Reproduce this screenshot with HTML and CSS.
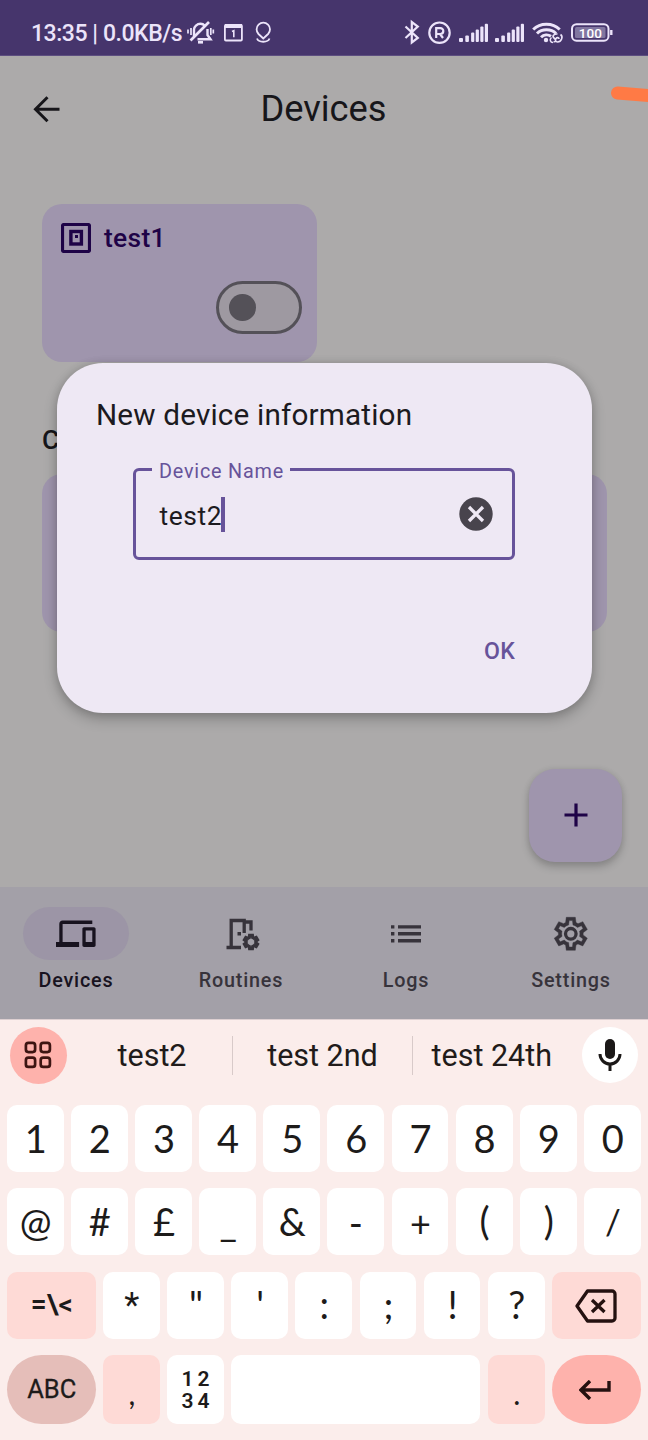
FILE: index.html
```html
<!DOCTYPE html>
<html lang="en">
<head>
<meta charset="utf-8">
<title>Devices</title>
<link rel="stylesheet" href="styles.css">
</head>
<body>
<svg class="defs" width="0" height="0">
  <defs>
    <path id="gear" d="m370-80-16-128q-13-5-24.5-12T307-235l-119 50L78-375l103-78q-1-7-1-13.5v-27q0-6.5 1-13.5L78-585l110-190 119 50q11-8 23-15t24-12l16-128h220l16 128q13 5 24.5 12t22.5 15l119-50 110 190-103 78q1 7 1 13.5v27q0 6.5-2 13.5l103 78-110 190-118-50q-11 8-23 15t-24 12L590-80H370Zm70-80h79l14-106q31-8 57.5-23.5T639-327l99 41 39-68-86-65q5-14 7-29.5t2-31.5q0-16-2-31.5t-7-29.5l86-65-39-68-99 42q-22-23-48.5-38.5T533-694l-13-106h-79l-14 106q-31 8-57.5 23.5T321-633l-99-41-39 68 86 64q-5 15-7 30t-2 32q0 16 2 31t7 30l-86 65 39 68 99-42q22 23 48.5 38.5T427-266l13 106Z"/>
    <g id="signal">
      <rect x="0" y="15" width="4" height="4" rx="1"/><rect x="6.3" y="12.5" width="3.6" height="6.5" rx="1"/><rect x="12.1" y="9.5" width="3.2" height="9.5" rx="1"/><rect x="16.7" y="6.5" width="3.2" height="12.5" rx="1"/><rect x="21.300" y="3.5" width="3.2" height="15.500" rx="1"/><rect x="25.800" y="0.800" width="3.200" height="18.200" rx="1"/>
    </g>
  </defs>
</svg>
<div class="screen">
  <header class="status">
    <span class="clock">13:35 | 0.0KB/s</span>
    <svg class="st-left" width="90" height="28" viewBox="186 19 90 28" fill="none" stroke="#ece4fa" stroke-width="1.800">
      <path d="M194 36.500v-7c0-3 3-5.700 6.500-5.700 2 0 3.500 1 4.500 2M207.500 29v6l3 4.200h-13" stroke-width="2.400"/>
      <path d="M190.500 40.500L209 22" stroke-width="2.600"/>
      <path d="M198 42.300h5" stroke-width="2.600"/>
      <path d="M188 29.500v4M191 28v7M210.800 28v7M213.300 29.500v4" stroke-width="1.700"/>
      <rect x="224.900" y="25" width="17" height="15.500" rx="1"/>
      <path d="M225 26h17" stroke-width="4"/>
      <path d="M232 31.500l1.800-.8v6.500" stroke-width="1.600"/>
      <path d="M263.300 38.500l-4.800-4.500a6.700 6.700 0 1 1 9.600 0zM257 38.500c1.500 4.300 11 4.300 12.500 0"/>
    </svg>
    <svg class="st-right" width="214" height="28" viewBox="402 19 214 28" fill="none" stroke="#ece4fa" stroke-width="2">
      <path d="M405.500 26.500l12.300 11.500-6 4.500V22l6 4.500L405.500 38" stroke-width="2.200"/>
      <circle cx="439.500" cy="32.700" r="10.200" stroke-width="2.200"/>
      <path d="M436.200 38V28.200h4.200a2.900 2.900 0 0 1 0 5.800h-4.200M440 34l3 4" stroke-width="2.200"/>
      <g fill="#ece4fa" stroke="none"><use href="#signal" x="459" y="23"/><use href="#signal" x="495" y="23"/></g>
      <path d="M533.200 29.500c7-7 19.500-7 26.500 0M537 33.500c5-5 14-5 19 0M541 37.300c3-3 7-3 10 -1" stroke-width="3"/>
      <circle cx="546" cy="40" r="2.200" fill="#ece4fa" stroke="none"/>
      <path d="M557.500 34c-4-.5-5.500 2.500-3.500 4s2.500 3.500-.5 4M551.500 37.500c-2.500 2-1 5 1.500 5M560.500 34.500c3 2 1 7.500-3 7.500-2 0-2.500-2-1.500-3.500s3-1 3 .5" stroke-width="1.600"/>
      <rect x="572" y="24.200" width="36.500" height="16.500" rx="4.500"/>
      <rect x="575" y="27" width="30.500" height="11" rx="1.500" fill="#8176a0" stroke="none"/>
      <path d="M611.300 30v5" stroke-width="2.400"/>
      <text class="batt" x="590.300" y="37.700" text-anchor="middle">100</text>
    </svg>
  </header>

  <div class="topbar">
    <svg width="40" height="40" viewBox="26 89 40 40" fill="none" stroke="#17161a" stroke-width="3"><path d="M59.500 109.300H36M47.500 97.300l-12 12 12 12"/></svg>
    <h1>Devices</h1>
    <svg class="mark" width="40" height="24" viewBox="608 82 40 24"><path d="M617.500 93l40 3.200" stroke="#ff7a45" stroke-width="13" stroke-linecap="round"/></svg>
  </div>

  <main>
    <section class="card">
      <div class="card-head">
        <svg width="30" height="30" viewBox="0 0 30 30" fill="none" stroke="#1e0347"><rect x="1.500" y="1.500" width="27" height="27" rx="1.500" stroke-width="3.200"/><rect x="9.900" y="8.500" width="10.500" height="12.500" stroke-width="3.400"/><rect x="14" y="12" width="3" height="3" fill="#1e0347" stroke="none"/></svg>
        <span>test1</span>
      </div>
      <div class="switch"><i></i></div>
    </section>
    <h2>C</h2>
    <section class="card wide"></section>
    <button class="fab"><svg width="24" height="24" viewBox="0 0 24 24" stroke="#1e0347" stroke-width="3.200"><path d="M12 0.500v23M0.500 12h23"/></svg></button>
  </main>

  <nav>
    <div class="tab on">
      <span class="pill"><svg width="39.600" height="39.600" viewBox="0 0 24 24" fill="#18131f"><path d="M4 6h18V4H4c-1.100 0-2 .9-2 2v11H0v3h14v-3H4V6zm19 2h-6c-.55 0-1 .45-1 1v10c0 .55.45 1 1 1h6c.55 0 1-.45 1-1V9c0-.55-.45-1-1-1zm-1 9h-4v-7h4v7z"/></svg></span>
      <b>Devices</b>
    </div>
    <div class="tab">
      <span class="pill"><svg width="40" height="40" viewBox="220.500 914 40 40" fill="none" stroke="#37333b" stroke-width="3.300"><path d="M226 947.500h14.500M230.700 947.500V920.500h13v12.500M243 922h7.500v8.500"/><rect x="237" y="932" width="3.500" height="3.500" fill="#37333b" stroke="none"/><svg x="241.500" y="933" width="18" height="18" viewBox="0 -960 960 960"><use href="#gear" fill="#37333b" stroke="#37333b" stroke-width="90"/></svg></svg></span>
      <b>Routines</b>
    </div>
    <div class="tab">
      <span class="pill"><svg width="30" height="18" viewBox="0 0 30 18" fill="#37333b"><path d="M0 .2h3.400v3.400H0zM7 .2h23v3.400H7zM0 7.100h3.400v3.400H0zM7 7.100h23v3.400H7zM0 14h3.400v3.400H0zM7 14h23v3.400H7z"/></svg></span>
      <b>Logs</b>
    </div>
    <div class="tab">
      <span class="pill"><svg width="39.600" height="39.600" viewBox="0 -960 960 960" fill="#37333b"><use href="#gear" stroke="#37333b" stroke-width="10"/><circle cx="480" cy="-480" r="128" fill="none" stroke="#37333b" stroke-width="80"/></svg></span>
      <b>Settings</b>
    </div>
  </nav>

  <div class="keyboard">
    <div class="suggest">
      <span class="round apps"><svg width="28" height="28" viewBox="0 0 28 28" fill="none" stroke="#3d1512" stroke-width="2.700"><rect x="1.900" y="1.900" width="9.200" height="9.200" rx="2.500"/><rect x="16.700" y="1.900" width="9.200" height="9.200" rx="2.500"/><rect x="1.900" y="16.700" width="9.200" height="9.200" rx="2.500"/><rect x="16.700" y="16.700" width="9.200" height="9.200" rx="2.500"/></svg></span>
      <span class="word w1">test2</span><span class="word w2">test 2nd</span><span class="word w3">test 24th</span>
      <span class="round mic"><svg width="24" height="32" viewBox="0 0 24 32" fill="none" stroke="#1b1817" stroke-width="3"><rect x="7" y="0" width="10" height="20" rx="5" fill="#1b1817" stroke="none"/><path d="M2 15a10 10 0 0 0 20 0M12 25v7"/></svg></span>
    </div>
    <div class="keys">
      <kbd>1</kbd><kbd>2</kbd><kbd>3</kbd><kbd>4</kbd><kbd>5</kbd><kbd>6</kbd><kbd>7</kbd><kbd>8</kbd><kbd>9</kbd><kbd>0</kbd>
      <kbd>@</kbd><kbd>#</kbd><kbd>£</kbd><kbd>_</kbd><kbd>&amp;</kbd><kbd class="dash">-</kbd><kbd class="plus">+</kbd><kbd class="paren">(</kbd><kbd class="paren">)</kbd><kbd class="slash">/</kbd>
      <kbd class="w pink alt">=\&lt;</kbd><kbd class="star">*</kbd><kbd>"</kbd><kbd>'</kbd><kbd>:</kbd><kbd>;</kbd><kbd>!</kbd><kbd>?</kbd>
      <kbd class="w pink back"><svg width="42" height="34" viewBox="0 0 42 34" fill="none" stroke="#241110" stroke-width="3.300" stroke-linejoin="round"><path d="M12.500 2H37a3 3 0 0 1 3 3v24a3 3 0 0 1-3 3H12.500L2 17zM17 11l12.500 12M29.500 11L17 23"/></svg></kbd>
      <kbd class="w abc">ABC</kbd><kbd class="pink low">,</kbd><kbd class="num"><span>12</span><span>34</span></kbd><kbd class="space"></kbd><kbd class="pink low">.</kbd>
      <kbd class="w enter"><svg width="32" height="20" viewBox="0 0 32 20" fill="none" stroke="#241110" stroke-width="3.400"><path d="M30 1v9H2.500M11 1L2 10l9 9"/></svg></kbd>
    </div>
  </div>

  <div class="dialog" role="dialog">
    <h3>New device information</h3>
    <div class="field">
      <label>Device Name</label>
      <span class="value">test2</span><i class="caret"></i>
      <svg class="clear" width="34" height="34" viewBox="0 0 34 34"><circle cx="17" cy="17" r="16.700" fill="#48444d"/><path d="M10 10l14 14M24 10L10 24" stroke="#eee8f4" stroke-width="3.300"/></svg>
    </div>
    <button class="ok">OK</button>
  </div>
</div>
</body>
</html>
```
FILE: styles.css
```css
* { box-sizing: border-box; margin: 0; padding: 0; }
body { font-family: Roboto, sans-serif; background: #acaaaa; }
svg { display: block; flex: none; }
.defs { position: absolute; }
button { border: 0; background: none; font: inherit; }
.screen { position: relative; width: 648px; height: 1440px; overflow: hidden; display: flex; flex-direction: column; }

.status { height: 56px; background: #46356c; border-bottom: 1px solid #5d4e80; display: flex; align-items: flex-start; padding: 19px 32px 0 31px; color: #ece4fa; }
.clock { font-size: 23px; font-weight: 500; letter-spacing: -.45px; line-height: 29px; width: 155px; white-space: nowrap; }
.st-right { margin-left: auto; }
.batt { font: 500 13.500px Roboto, sans-serif; fill: #fff; stroke: none; letter-spacing: .1px; }

.topbar { height: 106px; display: grid; grid-template-columns: 40px 1fr 40px; padding: 33px 0 0 26px; align-items: start; position: relative; }
.topbar h1 { font-size: 36.300px; font-weight: 400; line-height: 40px; text-align: center; color: #17161a; padding-right: 27px; }
.mark { position: absolute; left: 608px; top: 26px; }

main { flex: 1; padding: 42px 42px 0; }
.card { width: 275px; height: 158px; border-radius: 20px; background: #9f95ad; padding: 19px 15px 0 19px; display: flex; flex-direction: column; justify-content: space-between; }
.card.wide { width: 564.500px; height: 158px; margin-top: 18px; }
.card-head { display: flex; align-items: center; gap: 13px; font-size: 26.400px; font-weight: 500; letter-spacing: .3px; line-height: 30px; color: #1e0347; }
.switch { align-self: flex-end; width: 86px; height: 53px; border: 3.300px solid #545158; border-radius: 27px; background: #9e99a1; margin-bottom: 28px; display: flex; align-items: center; padding-left: 10px; }
.switch i { width: 26.500px; height: 26.500px; border-radius: 50%; background: #545158; }
main h2 { font-size: 26.400px; font-weight: 500; line-height: 32px; margin-top: 62px; color: #17161a; }
.fab { display: flex; align-items: center; justify-content: center; width: 93px; height: 93px; border-radius: 26px; background: #9f95ad; margin: 136.500px -16px 0 auto; box-shadow: 0 5px 9px rgba(0,0,0,.2), 0 0 6px rgba(0,0,0,.08); }

nav { height: 132px; background: #a3a0a8; display: grid; grid-template-columns: repeat(4, 1fr); column-gap: 13px; padding: 20px 1px 0 0; }
.tab { display: flex; flex-direction: column; align-items: center; color: #37333b; }
.tab.on { color: #18131f; }
.pill { width: 106px; height: 53px; border-radius: 27px; display: flex; align-items: center; justify-content: center; }
.on .pill { background: #9c95a6; }
.tab b { font-size: 19.800px; font-weight: 500; letter-spacing: .8px; line-height: 26px; margin-top: 7.500px; }

.keyboard { height: 421px; background: #fbedeb; border-top: 1px solid #ddcfd1; }
.suggest { height: 85px; padding: 7px 10px 0; display: grid; grid-template-columns: 57px 166px 180px 168.500px 56px; }
.round { width: 57px; height: 57px; border-radius: 50%; display: flex; align-items: center; justify-content: center; }
.apps { background: #feb2ac; padding: 0 1px 1px 0; }
.mic { background: #fff; width: 56px; height: 56px; }
.word { height: 39px; margin-top: 9px; font-size: 30.500px; line-height: 40px; text-align: center; color: #211b1a; }
.w1, .w2 { border-right: 1.500px solid #d8cac9; }
.w1 { padding-left: 5px; }
.w3 { padding-right: 11px; }
.keys { display: grid; grid-template-columns: repeat(20, 1fr); grid-template-rows: 67px 67px 67.500px 69px; column-gap: 7.300px; row-gap: 16.300px; padding: 0 7.200px 0 6.800px; }
kbd { grid-column: span 2; display: flex; align-items: center; justify-content: center; background: #fff; border-radius: 10px; font: 400 38px/40px Lato, sans-serif; padding: 0 0 2px 1px; color: #1d1b1a; min-width: 0; }
kbd.w { grid-column: span 3; }
kbd.space { grid-column: span 8; }
kbd.pink { background: #fedad6; }
kbd.plus { font-size: 36px; padding: 2px 0 0 1px; }
kbd.dash { padding: 0; }
kbd.paren { padding-bottom: 4px; }
kbd.slash { font-size: 35px; }
kbd.star { font: 400 35px/40px Roboto, sans-serif; padding: 2px 0 0 1px; }
kbd.alt { font: 600 28px Roboto, sans-serif; }
kbd.back { padding: 1px 0 0; }
kbd.abc { font: 400 25.500px Roboto, sans-serif; -webkit-text-stroke: .3px; background: #e5beb9; border-radius: 35px; }
kbd.enter { background: #feb2ac; border-radius: 35px; padding: 1px 2px 0 0; }
kbd.low { font-size: 30px; padding-top: 8px; }
kbd.num { flex-direction: column; font: 600 21px/22px Roboto, sans-serif; letter-spacing: 4px; padding: 1px 0 0 4px; }
kbd.num span { display: block; height: 22px; }

.dialog { position: absolute; left: 56.500px; top: 363px; width: 535px; height: 350px; border-radius: 46px; background: #eee8f4; box-shadow: 0 6px 14px rgba(0,0,0,.24), 0 0 8px rgba(0,0,0,.12); padding: 32px 76.500px 0 76px; }
.dialog h3 { font-size: 29.700px; font-weight: 400; line-height: 40px; letter-spacing: .17px; color: #1c1a20; margin-left: -36.500px; white-space: nowrap; }
.field { position: relative; height: 92px; margin-top: 33px; border: 3.300px solid #67539a; border-radius: 6px; display: flex; align-items: center; padding: 0 19.500px 0 24px; }
.field label { position: absolute; left: 16.500px; top: -10px; padding: 0 6px 0 7px; background: #eee8f4; color: #67539a; font-size: 19.800px; line-height: 22px; letter-spacing: .8px; white-space: nowrap; }
.value { font-size: 26.400px; letter-spacing: .6px; color: #1c1a20; padding-top: 3px; }
.caret { width: 3.500px; height: 35px; background: #67539a; margin-left: -1px; }
.clear { margin-left: auto; }
.ok { display: block; margin: 76px 0 0 auto; font-size: 23.100px; font-weight: 500; line-height: 32px; letter-spacing: .2px; color: #67539a; }
```
